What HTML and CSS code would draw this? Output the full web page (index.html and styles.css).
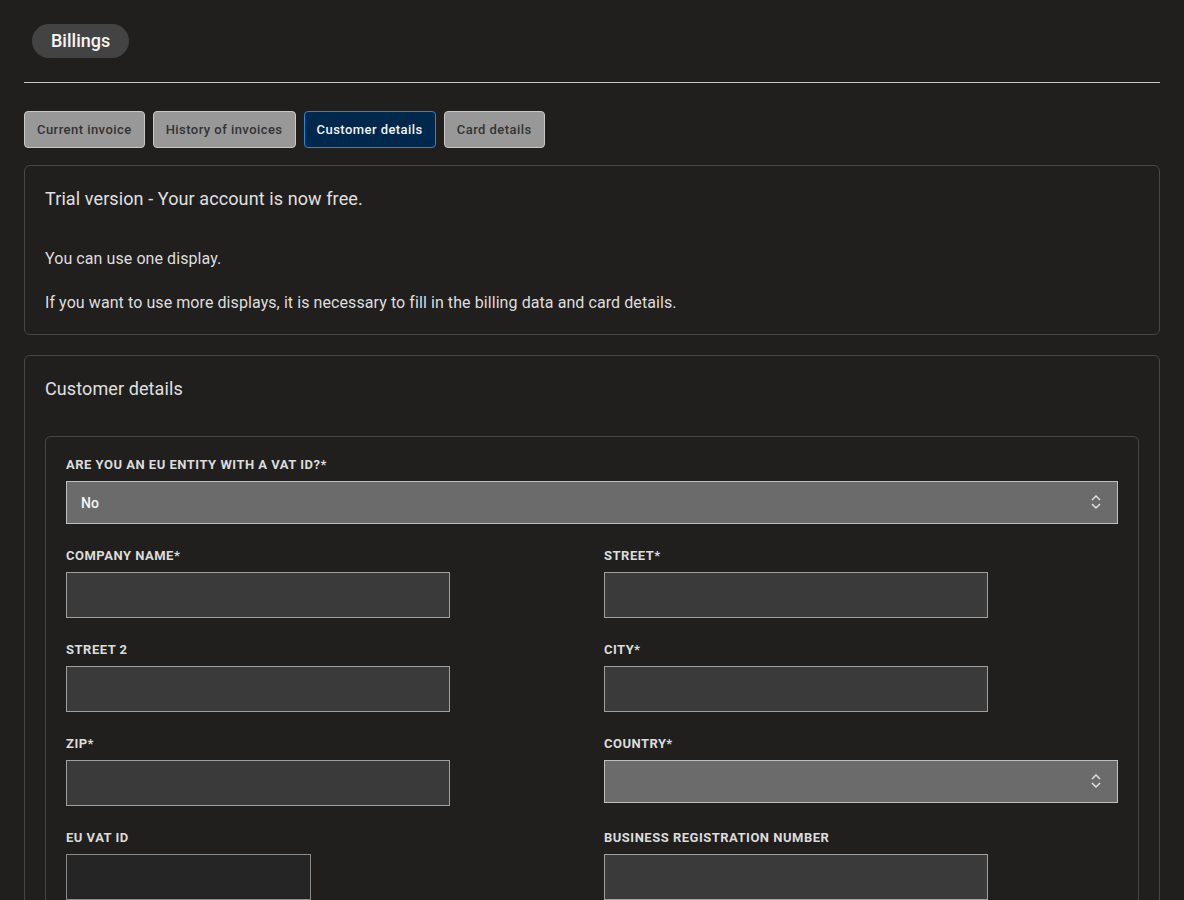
FILE: index.html
```html
<!DOCTYPE html>
<html lang="en">
<head>
    <meta charset="UTF-8">
    <meta name="viewport" content="width=device-width, initial-scale=1.0">
    <title>Billings</title>
    <link rel="stylesheet" href="styles.css">
</head>
<body>
    <div class="page-header">
        <span class="page-title">Billings</span>
    </div>

    <div class="tabs">
        <button type="button" class="tab">Current invoice</button>
        <button type="button" class="tab">History of invoices</button>
        <button type="button" class="tab active">Customer details</button>
        <button type="button" class="tab">Card details</button>
    </div>

    <div class="card">
        <h2 class="card-title">Trial version - Your account is now free.</h2>
        <p class="first">You can use one display.</p>
        <p>If you want to use more displays, it is necessary to fill in the billing data and card details.</p>
    </div>

    <div class="card form-card">
        <h2 class="card-title">Customer details</h2>

        <form class="form-box">
            <div class="form-group">
                <label for="euEntity">Are you an EU entity with a VAT ID?*</label>
                <div class="select-wrap">
                    <select id="euEntity">
                        <option value="no">No</option>
                        <option value="yes">Yes</option>
                    </select>
                    <svg class="select-arrows" width="10" height="14" viewBox="0 0 10 14">
                        <path d="M1 5 L5 1 L9 5 M1 9 L5 13 L9 9" fill="none" stroke="#e6e6e6" stroke-width="1.4"/>
                    </svg>
                </div>
            </div>

            <div class="form-grid">
                <div class="form-group">
                    <label for="company">Company name*</label>
                    <input type="text" id="company">
                </div>
                <div class="form-group">
                    <label for="street">Street*</label>
                    <input type="text" id="street">
                </div>
                <div class="form-group">
                    <label for="street2">Street 2</label>
                    <input type="text" id="street2">
                </div>
                <div class="form-group">
                    <label for="city">City*</label>
                    <input type="text" id="city">
                </div>
                <div class="form-group">
                    <label for="zip">Zip*</label>
                    <input type="text" id="zip">
                </div>
                <div class="form-group">
                    <label for="country">Country*</label>
                    <div class="select-wrap">
                        <select id="country">
                            <option value=""></option>
                        </select>
                        <svg class="select-arrows" width="10" height="14" viewBox="0 0 10 14">
                            <path d="M1 5 L5 1 L9 5 M1 9 L5 13 L9 9" fill="none" stroke="#e6e6e6" stroke-width="1.4"/>
                        </svg>
                    </div>
                </div>
                <div class="form-group">
                    <label for="vatId">EU VAT ID</label>
                    <input type="text" id="vatId" class="short" disabled>
                </div>
                <div class="form-group">
                    <label for="regNumber">Business registration number</label>
                    <input type="text" id="regNumber">
                </div>
            </div>
        </form>
    </div>
</body>
</html>
```

FILE: styles.css
```css
body {
    margin: 0;
    padding: 24px;
    background-color: #201f1e;
    color: #dedede;
    font-family: Roboto, "Noto Sans", sans-serif;
}
.page-header {
    padding: 0 8px 24px;
    border-bottom: 1px solid #c8c8c8;
}
.page-title {
    display: inline-block;
    height: 34px;
    line-height: 34px;
    padding: 0 19px;
    border-radius: 17px;
    background-color: #444343;
    color: #f5f5f5;
    font-size: 18px;
    font-weight: 500;
}
.tabs {
    display: flex;
    gap: 8px;
    margin: 28px 0 17px;
}
.tab {
    height: 37px;
    padding: 0 12px;
    border: 1px solid #c8c8c8;
    border-radius: 4px;
    background-color: #989898;
    color: #333;
    font-family: inherit;
    font-size: 13px;
    font-weight: 500;
    letter-spacing: 0.45px;
    cursor: pointer;
}
.tab.active {
    background-color: #00284c;
    border-color: #1a8ce0;
    color: #f2f2f2;
}
.card {
    border: 1px solid #474646;
    border-radius: 6px;
    padding: 21px 20px 19px;
    margin-bottom: 20px;
}
.card-title {
    margin: 0 0 36px;
    font-size: 18px;
    line-height: 24px;
    font-weight: 400;
    letter-spacing: 0.1px;
    color: #e0e0e0;
}
.form-card .card-title {
    margin-bottom: 35px;
}
.card p {
    margin: 20px 0 0;
    font-size: 16px;
    line-height: 24px;
    letter-spacing: 0.08px;
}
.card p.first {
    margin-top: 0;
}
.form-box {
    border: 1px solid #474646;
    border-radius: 6px;
    padding: 20px;
}
.form-grid {
    display: grid;
    grid-template-columns: 1fr 1fr;
    column-gap: 24px;
}
.form-group {
    margin-bottom: 24px;
}
label {
    display: block;
    margin-bottom: 8px;
    font-size: 13px;
    line-height: 16px;
    font-weight: 700;
    text-transform: uppercase;
    letter-spacing: 0.5px;
    color: #dcdcdc;
}
input {
    display: block;
    width: 384px;
    height: 46px;
    box-sizing: border-box;
    border: 1px solid #a0a0a0;
    background-color: #3a3a3a;
    color: #eee;
    padding: 0 14px;
    font-family: inherit;
    font-size: 14px;
}
input.short {
    width: 245px;
    background-color: #252525;
    border-color: #8a8a8a;
}
.select-wrap {
    position: relative;
}
select {
    display: block;
    width: 100%;
    height: 43px;
    box-sizing: border-box;
    appearance: none;
    border: 1px solid #c0c0c0;
    background-color: #6b6b6b;
    color: #f5f5f5;
    padding: 0 14px;
    font-family: inherit;
    font-size: 14px;
    font-weight: 500;
}
.select-arrows {
    position: absolute;
    right: 17px;
    top: 14px;
    pointer-events: none;
}
```
